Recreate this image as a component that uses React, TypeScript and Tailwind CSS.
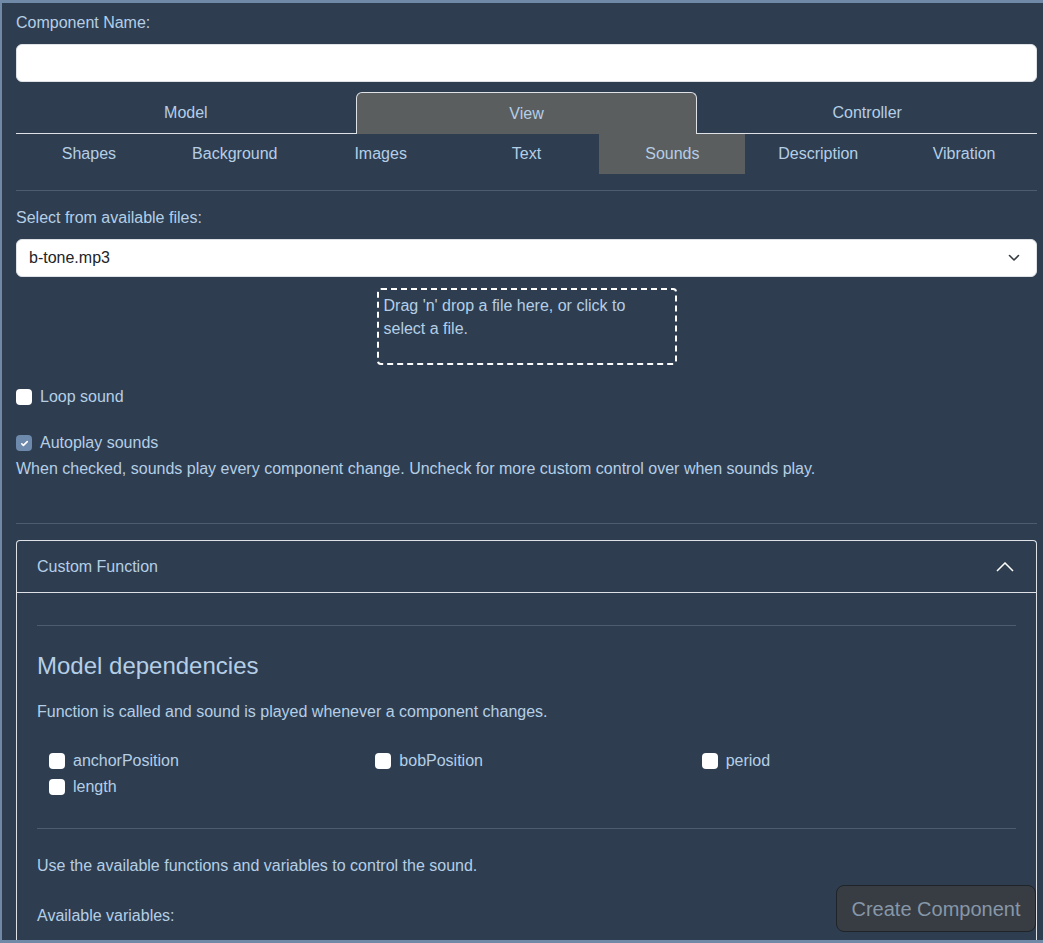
import React, { useState } from 'react';

const mainTabs = ['Model', 'View', 'Controller'];
const viewTabs = ['Shapes', 'Background', 'Images', 'Text', 'Sounds', 'Description', 'Vibration'];
const deps = ['anchorPosition', 'bobPosition', 'period', 'length'];

const Check: React.FC<{ checked?: boolean }> = ({ checked }) => (
  <span
    className={
      'inline-flex h-4 w-4 shrink-0 items-center justify-center rounded-[4px] ' +
      (checked ? 'bg-[#6d89ab]' : 'bg-white')
    }
  >
    {checked && (
      <svg width="11" height="11" viewBox="0 0 20 20">
        <path d="M5 10.5l3 3 7-7" fill="none" stroke="#fff" strokeWidth="3" strokeLinecap="round" strokeLinejoin="round" />
      </svg>
    )}
  </span>
);

export default function App() {
  const [open, setOpen] = useState(true);

  return (
    <div
      className="relative h-[943px] overflow-hidden border-t-[3px] border-l-2 border-b-[3px] border-[#6f89a6] bg-[#2e3e50] pl-[14px] pr-[6px] pt-[8px] text-[16px] leading-6 text-[#b5cee6]"
      style={{ fontFamily: '"Liberation Sans", Arial, sans-serif' }}
    >
      <div>Component Name:</div>
      <input className="mt-[9px] block h-[38px] w-full rounded-md border border-[#dee2e6] bg-white px-3 text-[#212529] outline-none" />

      {/* main tabs */}
      <div className="mt-[10px] flex border-b border-[#dee2e6]">
        {mainTabs.map((t) => (
          <div
            key={t}
            className={
              'mb-[-1px] flex h-[42px] flex-1 items-center justify-center rounded-t-md ' +
              (t === 'View' ? 'border border-b-0 border-[#dee2e6] bg-[#5b5e5f]' : '')
            }
          >
            {t}
          </div>
        ))}
      </div>

      {/* view sub tabs */}
      <div className="flex">
        {viewTabs.map((t) => (
          <div
            key={t}
            className={'flex h-[40px] flex-1 items-center justify-center ' + (t === 'Sounds' ? 'bg-[#5b5e5f]' : '')}
          >
            {t}
          </div>
        ))}
      </div>
      <div className="mt-[16px] border-t border-[#4b5d6f]" />

      <div className="mt-[15px]">Select from available files:</div>
      <div className="mt-[9px] flex h-[38px] w-full items-center justify-between rounded-md border border-[#dee2e6] bg-white pl-3 pr-4 text-[#212529]">
        <span>b-tone.mp3</span>
        <svg width="12" height="8" viewBox="0 0 12 8">
          <path d="M1.5 1.5l4.5 4.5 4.5-4.5" fill="none" stroke="#343a40" strokeWidth="1.6" strokeLinecap="round" strokeLinejoin="round" />
        </svg>
      </div>

      <div className="mt-[11px] flex justify-center">
        <div className="h-[77px] w-[300px] rounded-[4px] border-2 border-dashed border-white px-[5px] pt-[4px] leading-[23px]">
          Drag 'n' drop a file here, or click to select a file.
        </div>
      </div>

      <label className="mt-[20px] flex items-center gap-[8px]">
        <Check />
        <span>Loop sound</span>
      </label>
      <label className="mt-[22px] flex items-center gap-[8px]">
        <Check checked />
        <span>Autoplay sounds</span>
      </label>
      <div className="mt-[2px]">
        When checked, sounds play every component change. Uncheck for more custom control over when sounds play.
      </div>

      <div className="mt-[42px] border-t border-[#4b5d6f]" />

      {/* accordion */}
      <div className="mt-[16px] rounded-t-[4px] border border-b-0 border-[#dee2e6]">
        <button
          onClick={() => setOpen(!open)}
          className="flex h-[52px] w-full items-center justify-between border-b border-[#dee2e6] px-[20px] text-left"
        >
          <span>Custom Function</span>
          <svg width="18" height="10" viewBox="0 0 18 10" className="mr-[2px]">
            <path d={open ? 'M1 9l8-8 8 8' : 'M1 1l8 8 8-8'} fill="none" stroke="#fff" strokeWidth="1.5" />
          </svg>
        </button>
        {open && (
          <div className="px-[20px] pt-[32px] pb-[40px]">
            <div className="border-t border-[#4b5d6f]" />
            <h5 className="mt-[25px] text-[24px] font-normal leading-[30px]">Model dependencies</h5>
            <p className="mt-[19px]">Function is called and sound is played whenever a component changes.</p>
            <div className="mt-[24px] grid grid-cols-3 leading-[26px]">
              {deps.map((d) => (
                <label key={d} className="flex items-center gap-[8px] pl-[12px]">
                  <Check />
                  <span>{d}</span>
                </label>
              ))}
            </div>
            <div className="mt-[28px] border-t border-[#4b5d6f]" />
            <p className="mt-[25px]">Use the available functions and variables to control the sound.</p>
            <p className="mt-[26px]">Available variables:</p>
          </div>
        )}
      </div>

      <button className="absolute bottom-[8px] right-[7px] h-[47px] w-[200px] rounded-lg border border-[#1f2428] bg-[#373d43] text-[20px] text-[#8797a8]">
        Create Component
      </button>
    </div>
  );
}
